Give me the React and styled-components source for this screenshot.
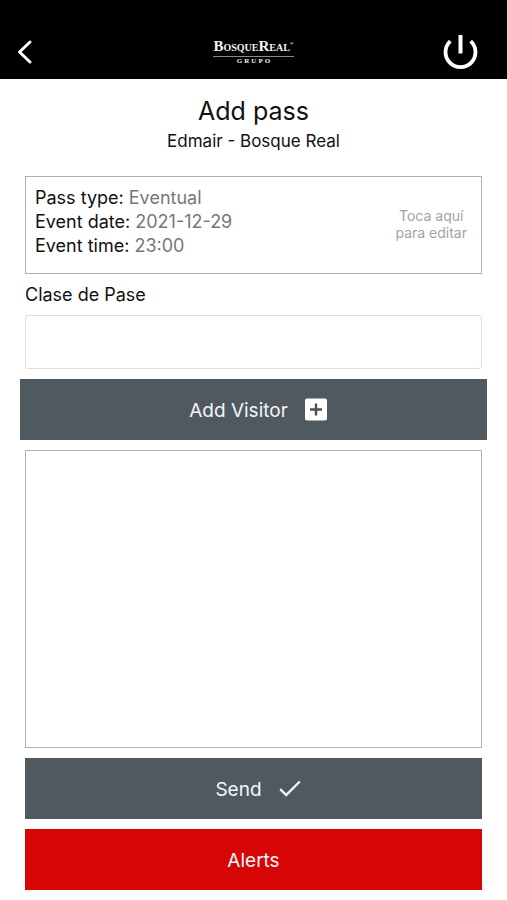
import React, { useState } from 'react';
import styled, { createGlobalStyle, ThemeProvider } from 'styled-components';

const theme = {
  black: '#000000',
  slate: '#505860',
  red: '#d70606',
  border: '#b2b2b2',
  lightBorder: '#dedede',
  grey: '#777777',
  lightGrey: '#a3a3a3',
  fontSize: {
    xs: '14px',
    s: '17px',
    m: '18px',
    l: '19px',
    xl: '25px',
  },
};

const GlobalStyle = createGlobalStyle`
  *, *::before, *::after {
    box-sizing: border-box;
  }

  body {
    margin: 0;
    background-color: #fff;
    color: #111;
    font-family: Inter, 'Liberation Sans', sans-serif;
  }
`;

const StyledPage = styled.div`
  display: flex;
  flex-direction: column;
  min-height: 100vh;
`;

const StyledHeader = styled.header`
  display: flex;
  align-items: center;
  justify-content: space-between;
  height: 79px;
  padding: 25px 24px 0 12px;
  background-color: ${({ theme }) => theme.black};
`;

const StyledIconButton = styled.button`
  display: flex;
  padding: 0;
  border: 0;
  background: none;
  color: #fff;
  cursor: pointer;
`;

const StyledSide = styled.div`
  display: flex;
  flex: 1;
  justify-content: ${({ $end }) => ($end ? 'flex-end' : 'flex-start')};
`;

const StyledLogo = styled.a`
  display: flex;
  flex-direction: column;
  align-items: center;
  margin-left: 12px;
  color: #f2f2f2;
  font-family: 'Liberation Serif', serif;
  font-weight: bold;
  text-decoration: none;
`;

const StyledLogoName = styled.span`
  padding-bottom: 1px;
  border-bottom: 1px solid #8a8a8a;
  font-size: 10px;
  line-height: 14px;
`;

const StyledLogoCapital = styled.span`
  font-size: 15px;
`;

const StyledLogoMark = styled.sup`
  font-size: 5px;
  line-height: 1;
  vertical-align: 6px;
`;

const StyledLogoGroup = styled.span`
  padding-left: 2px;
  font-size: 7px;
  line-height: 8px;
  letter-spacing: 2px;
`;

const StyledMain = styled.main`
  display: flex;
  flex: 1;
  flex-direction: column;
  gap: 10px;
  padding: 15px 25px 10px;
`;

const StyledHeading = styled.div`
  margin-bottom: 13px;
  text-align: center;
`;

const StyledTitle = styled.h1`
  margin: 0;
  font-size: ${({ theme }) => theme.fontSize.xl};
  font-weight: 400;
  line-height: 34px;
`;

const StyledSubtitle = styled.p`
  margin: 0;
  padding-top: 1px;
  font-size: ${({ theme }) => theme.fontSize.s};
  line-height: 24px;
`;

const StyledPassCard = styled.button`
  display: flex;
  align-items: center;
  justify-content: space-between;
  height: 98px;
  padding: 0 14px 0 9px;
  border: 1px solid ${({ theme }) => theme.border};
  background-color: #fff;
  color: inherit;
  font-family: inherit;
  text-align: left;
  cursor: pointer;
`;

const StyledDetails = styled.span`
  display: flex;
  flex-direction: column;
  padding-bottom: 6px;
  font-size: ${({ theme }) => theme.fontSize.m};
  line-height: 24px;
`;

const StyledValue = styled.span`
  color: ${({ theme }) => theme.grey};
`;

const StyledHint = styled.span`
  padding-bottom: 2px;
  color: ${({ theme }) => theme.lightGrey};
  font-size: ${({ theme }) => theme.fontSize.xs};
  line-height: 17px;
  text-align: center;
`;

const StyledField = styled.div`
  display: flex;
  flex-direction: column;
  gap: 9px;
`;

const StyledLabel = styled.label`
  font-size: ${({ theme }) => theme.fontSize.m};
  line-height: 22px;
`;

const StyledInput = styled.input`
  width: 100%;
  height: 54px;
  padding: 0 12px;
  border: 1px solid ${({ theme }) => theme.lightBorder};
  border-radius: 3px;
  background-color: #fff;
  font-family: inherit;
  font-size: ${({ theme }) => theme.fontSize.m};
`;

const StyledButton = styled.button`
  display: flex;
  flex-shrink: 0;
  align-items: center;
  justify-content: center;
  gap: 16px;
  height: 61px;
  margin: ${({ $wide }) => ($wide ? '0 -5px' : '0')};
  padding: ${({ $withIcon }) => ($withIcon ? '1px 16px 0 26px' : '1px 16px 0')};
  border: 0;
  background-color: ${({ theme, $color }) => theme[$color]};
  color: #f3f6f9;
  font-family: inherit;
  font-size: ${({ theme }) => theme.fontSize.l};
  cursor: pointer;
`;

const StyledVisitors = styled.section`
  flex: 1;
  border: 1px solid ${({ theme }) => theme.border};
`;

const BackIcon = () => (
  <svg width="24" height="28" viewBox="0 0 24 28" fill="none" aria-hidden="true">
    <path
      d="M18 4 7.5 14 18 24"
      stroke="currentColor"
      strokeWidth="3"
      strokeLinecap="round"
      strokeLinejoin="round"
    />
  </svg>
);

const PowerIcon = () => (
  <svg width="46" height="40" viewBox="0 0 46 40" fill="none" aria-hidden="true">
    <path d="M13.3 9.2A15 15 0 1 0 33.7 9.2" stroke="currentColor" strokeWidth="3.8" />
    <path d="M23.5 3v18.5" stroke="currentColor" strokeWidth="4" />
  </svg>
);

const AddBoxIcon = () => (
  <svg width="24" height="24" viewBox="0 0 24 24" aria-hidden="true">
    <rect x="1" y="0.5" width="22" height="22" rx="2" fill="#fff" />
    <path d="M12 5.5v12M6 11.5h12" stroke="#4c4f53" strokeWidth="2.4" />
  </svg>
);

const CheckIcon = () => (
  <svg width="24" height="24" viewBox="0 0 24 24" fill="none" aria-hidden="true">
    <path d="M2.2 12.2 8.2 18 21.8 4.5" stroke="currentColor" strokeWidth="2.4" />
  </svg>
);

const passDetails = [
  { name: 'Pass type', value: 'Eventual' },
  { name: 'Event date', value: '2021-12-29' },
  { name: 'Event time', value: '23:00' },
];

const Header = () => (
  <StyledHeader>
    <StyledSide>
      <StyledIconButton type="button" aria-label="Back">
        <BackIcon />
      </StyledIconButton>
    </StyledSide>
    <StyledLogo href="#">
      <StyledLogoName>
        <StyledLogoCapital>B</StyledLogoCapital>OSQUE
        <StyledLogoCapital>R</StyledLogoCapital>EAL
        <StyledLogoMark>®</StyledLogoMark>
      </StyledLogoName>
      <StyledLogoGroup>GRUPO</StyledLogoGroup>
    </StyledLogo>
    <StyledSide $end>
      <StyledIconButton type="button" aria-label="Log out">
        <PowerIcon />
      </StyledIconButton>
    </StyledSide>
  </StyledHeader>
);

const App = () => {
  const [passClass, setPassClass] = useState('');

  return (
    <ThemeProvider theme={theme}>
      <GlobalStyle />
      <StyledPage>
        <Header />
        <StyledMain>
          <StyledHeading>
            <StyledTitle>Add pass</StyledTitle>
            <StyledSubtitle>Edmair - Bosque Real</StyledSubtitle>
          </StyledHeading>
          <StyledPassCard type="button">
            <StyledDetails>
              {passDetails.map(({ name, value }) => (
                <span key={name}>
                  {name}: <StyledValue>{value}</StyledValue>
                </span>
              ))}
            </StyledDetails>
            <StyledHint>
              Toca aquí
              <br />
              para editar
            </StyledHint>
          </StyledPassCard>
          <StyledField>
            <StyledLabel htmlFor="pass-class">Clase de Pase</StyledLabel>
            <StyledInput
              id="pass-class"
              value={passClass}
              onChange={e => setPassClass(e.target.value)}
            />
          </StyledField>
          <StyledButton type="button" $color="slate" $wide $withIcon>
            Add Visitor
            <AddBoxIcon />
          </StyledButton>
          <StyledVisitors aria-label="Visitors" />
          <StyledButton type="button" $color="slate" $withIcon>
            Send
            <CheckIcon />
          </StyledButton>
          <StyledButton type="button" $color="red">
            Alerts
          </StyledButton>
        </StyledMain>
      </StyledPage>
    </ThemeProvider>
  );
};

export default App;
